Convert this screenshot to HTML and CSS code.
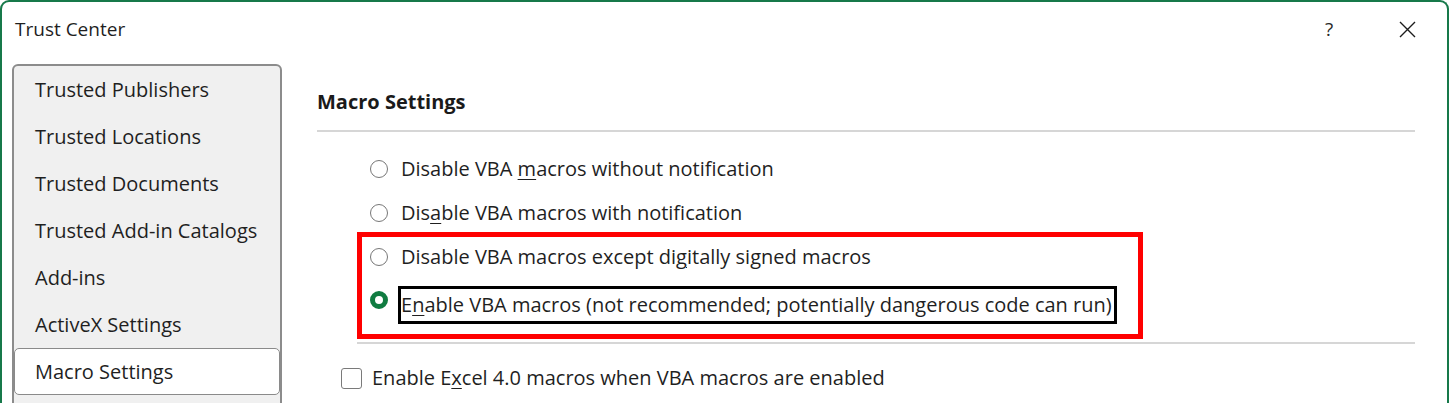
FILE: index.html
```html
<!DOCTYPE html>
<html lang="en">
<head>
<meta charset="utf-8">
<title>Trust Center</title>
<link rel="stylesheet" href="styles.css">
</head>
<body>
<div class="window">
  <div class="titlebar">
    <div class="title">Trust Center</div>
    <div class="title-actions">
      <span class="help">?</span>
      <span class="close">
        <svg width="17" height="17" viewBox="0 0 17 17"><path d="M1 1 L16 16 M16 1 L1 16" stroke="#1c1c1c" stroke-width="1.4" fill="none"/></svg>
      </span>
    </div>
  </div>
  <div class="content">
    <nav class="nav">
      <div class="nav-item">Trusted Publishers</div>
      <div class="nav-item">Trusted Locations</div>
      <div class="nav-item">Trusted Documents</div>
      <div class="nav-item">Trusted Add-in Catalogs</div>
      <div class="nav-item">Add-ins</div>
      <div class="nav-item">ActiveX Settings</div>
      <div class="nav-item selected">Macro Settings</div>
    </nav>
    <main class="main">
      <h2 class="heading">Macro Settings</h2>
      <div class="sep"></div>
      <div class="radio-group">
        <div class="radio-row"><span class="radio"></span><span class="label">Disable VBA <u>m</u>acros without notification</span></div>
        <div class="radio-row"><span class="radio"></span><span class="label">Dis<u>a</u>ble VBA macros with notification</span></div>
        <div class="highlight">
          <div class="radio-row short"><span class="radio"></span><span class="label">Disable VBA macros except di<u>g</u>itally signed macros</span></div>
          <div class="radio-row focused"><span class="radio checked"></span><span class="label focus-box">E<u>n</u>able VBA macros (not recommended; potentially dangerous code can run)</span></div>
        </div>
        <div class="sep sep-inner"></div>
      </div>
      <div class="check-row"><span class="checkbox"></span><span class="label">Enable E<u>x</u>cel 4.0 macros when VBA macros are enabled</span></div>
    </main>
  </div>
</div>
</body>
</html>
```
FILE: styles.css
```css
* { box-sizing: border-box; }
html, body { margin: 0; padding: 0; background: #ffffff; }
body {
  font-family: "Open Sans", "Noto Sans", "Liberation Sans", sans-serif;
  color: #1f1f1f;
  width: 1449px;
  height: 403px;
  overflow: hidden;
}
.window {
  border: 2px solid #17794a;
  border-bottom: none;
  border-radius: 9px 9px 0 0;
  height: 420px;
  width: 1449px;
  display: flex;
  flex-direction: column;
  overflow: hidden;
}
.titlebar {
  height: 54px;
  flex: none;
  display: flex;
  align-items: center;
  justify-content: space-between;
  padding-left: 13px;
}
.title { font-size: 19px; line-height: 24px; }
.title-actions { display: flex; align-items: center; }
.help { font-size: 19px; color: #2a2a2a; width: 12px; margin-right: 62px; }
.close { width: 17px; height: 17px; display: flex; margin-right: 31px; }
.content {
  flex: 1;
  display: flex;
  padding-top: 8px;
  padding-left: 10px;
}
.nav {
  width: 270px;
  flex: none;
  height: 380px;
  background: #f0f0f0;
  border: 2px solid #8c8c8c;
  border-radius: 6px;
  overflow: hidden;
}
.nav-item {
  height: 47px;
  display: flex;
  align-items: center;
  padding-left: 21px;
  font-size: 20px;
  color: #1f1f1f;
}
.nav-item.selected {
  background: #ffffff;
  border: 1px solid #8a8a8a;
  border-radius: 5px;
  padding-left: 20px;
}
.main {
  flex: 1;
  margin-left: 35px;
  margin-right: 32px;
}
.heading {
  margin: 24px 0 0 0;
  font-size: 20px;
  line-height: 28px;
  font-weight: 700;
  color: #1a1a1a;
}
.sep {
  height: 2px;
  background: #d6d6d6;
  margin-top: 14px;
}
.radio-group {
  padding-left: 53px;
  margin-top: 15px;
}
.radio-row {
  height: 44px;
  display: flex;
  align-items: center;
}
.radio-row.short { height: 40px; }
.radio-row.focused {
  height: auto;
  align-items: flex-start;
  margin-top: 9px;
}
.radio {
  width: 18px;
  height: 18px;
  border: 1.5px solid #777777;
  border-radius: 50%;
  flex: none;
  margin-right: 13px;
  background: #fff;
}
.radio.checked {
  border: 5px solid #107c41;
  margin-top: 5px;
  margin-right: 10px;
}
.label {
  font-size: 20px;
  line-height: 26px;
  color: #1f1f1f;
  white-space: nowrap;
}
.label u { text-underline-offset: 3px; text-decoration-thickness: 1px; }
.focus-box {
  border: 3px solid #000;
  line-height: 32px;
  padding-right: 2px;
  display: block;
}
.highlight {
  border: 5px solid #ff0000;
  width: 786px;
  margin-top: -3px;
  margin-left: -13px;
  padding-left: 8px;
  padding-bottom: 10px;
}
.sep.sep-inner {
  margin-top: 3px;
  margin-left: -13px;
}
.check-row {
  display: flex;
  align-items: center;
  height: 40px;
  margin-top: 14px;
  margin-left: 24px;
}
.checkbox {
  width: 21px;
  height: 21px;
  border: 1.5px solid #7a7a7a;
  border-radius: 3px;
  flex: none;
  margin-right: 10px;
}
```
